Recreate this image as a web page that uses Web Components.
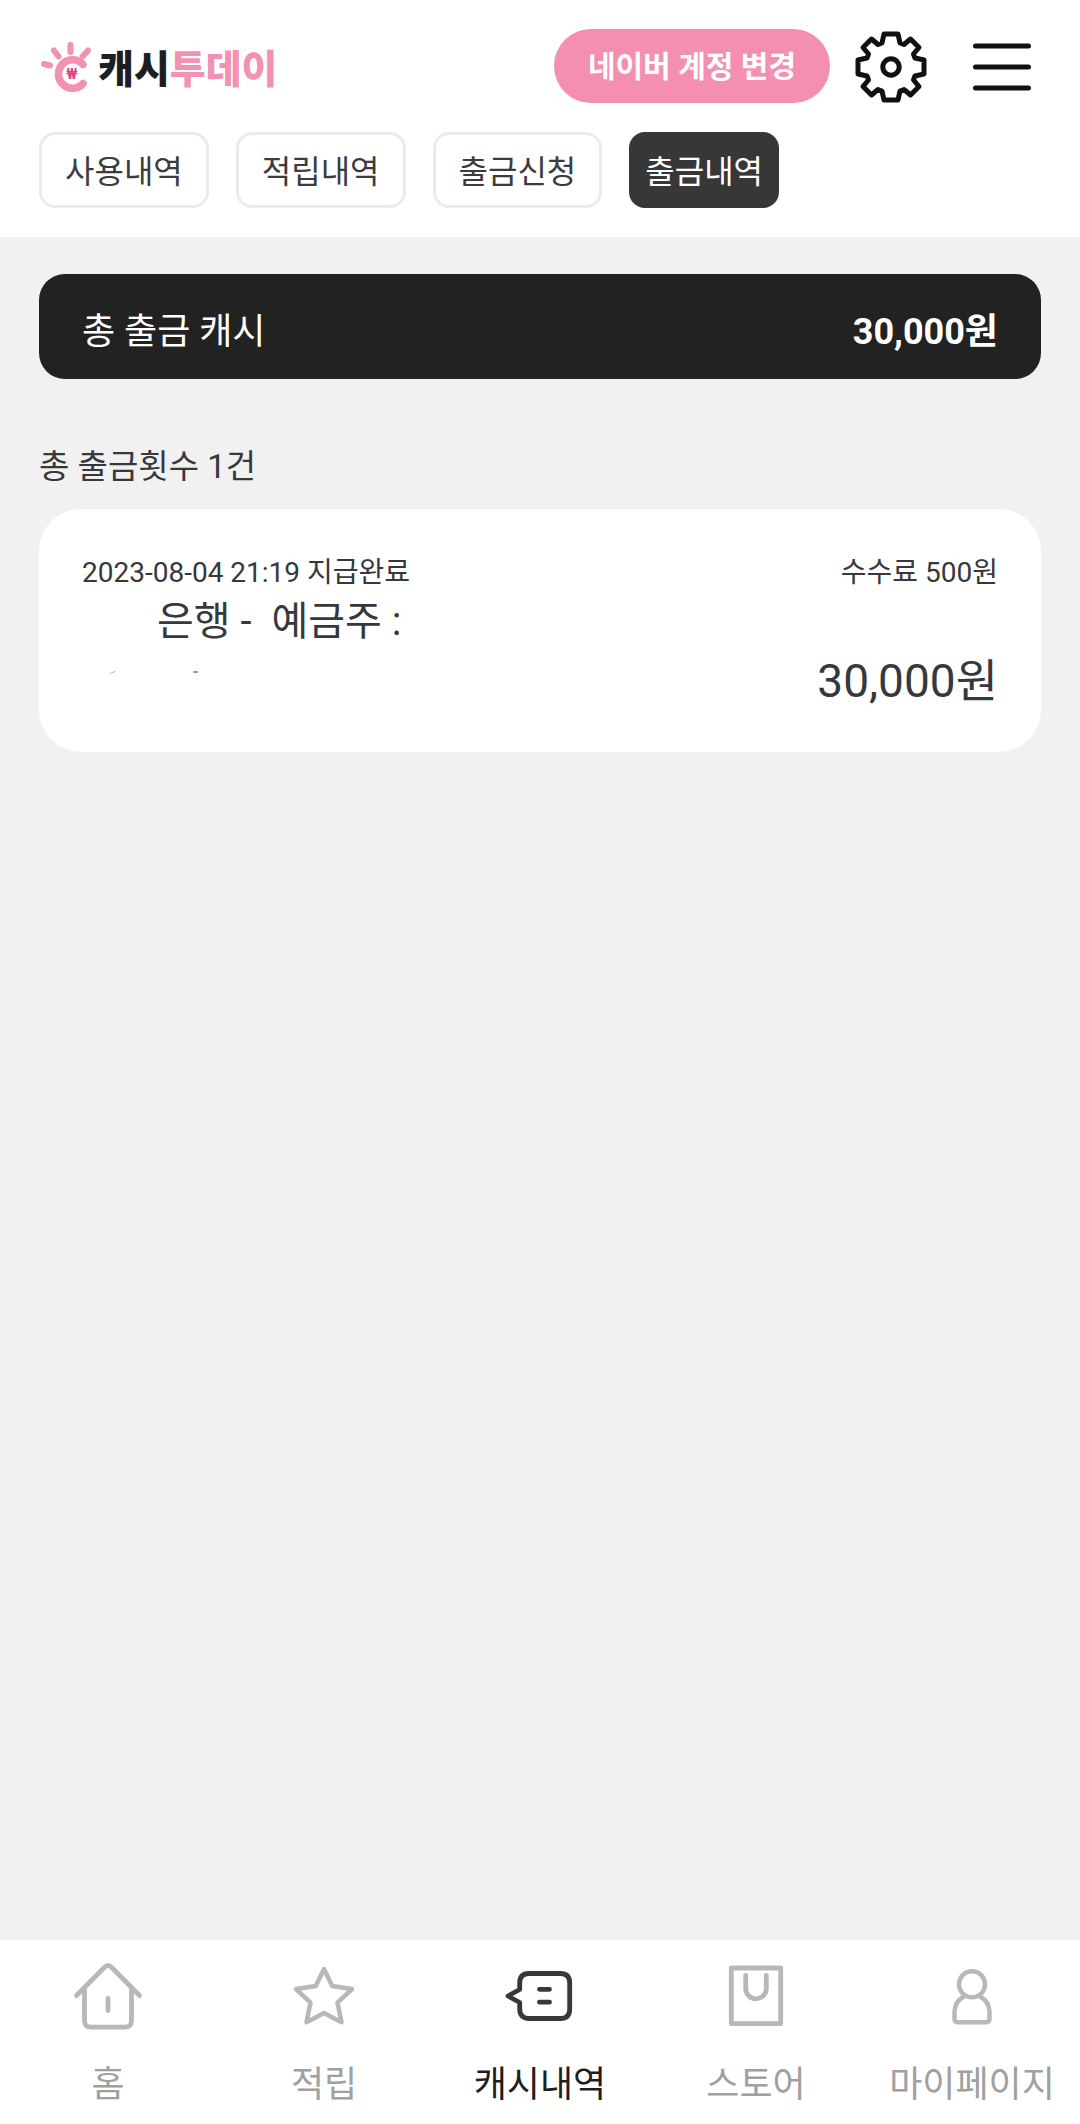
<!DOCTYPE html>
<html lang="ko">
<head>
<meta charset="utf-8">
<meta name="viewport" content="width=device-width, initial-scale=1">
<title>캐시투데이</title>
<style>
  body { margin: 0; background: #f1f1f1; color: #36383b; font-family: Roboto, "Noto Sans CJK KR", sans-serif; }
</style>
</head>
<body>
<cash-app>
  <app-header slot="header">
    <history-tab slot="tabs">사용내역</history-tab>
    <history-tab slot="tabs">적립내역</history-tab>
    <history-tab slot="tabs">출금신청</history-tab>
    <history-tab slot="tabs" active>출금내역</history-tab>
  </app-header>
  <total-card><span slot="label">총 출금 캐시</span><span slot="amount">30,000원</span></total-card>
  <withdraw-list>
    <span slot="caption">총 출금횟수 1건</span>
    <withdraw-card>
      <span slot="status">2023-08-04 21:19 지급완료</span>
      <span slot="fee">수수료 500원</span>
      <span slot="bank">은행 -&nbsp; 예금주 :</span>
      <span slot="amount">30,000원</span>
    </withdraw-card>
  </withdraw-list>
  <bottom-nav slot="footer">
    <nav-item icon="home">홈</nav-item>
    <nav-item icon="star">적립</nav-item>
    <nav-item icon="ticket" active>캐시내역</nav-item>
    <nav-item icon="bag">스토어</nav-item>
    <nav-item icon="person">마이페이지</nav-item>
  </bottom-nav>
</cash-app>
<script>
const define = (name, html) => customElements.define(name, class extends HTMLElement {
  constructor() {
    super();
    this.attachShadow({ mode: 'open' }).innerHTML = html;
  }
});

define('cash-app', `
<style>
  :host { display: flex; flex-direction: column; min-height: 100vh; }
  main { flex: 1; padding: 37px 39px; }
  footer { position: sticky; bottom: 0; }
</style>
<slot name="header"></slot>
<main><slot></slot></main>
<footer><slot name="footer"></slot></footer>`);

define('brand-logo', `
<style>
  :host { display: block; }
  a { display: flex; align-items: center; gap: 7px; color: #1e1e1e; text-decoration: none;
      font: 900 39px/52px "Noto Sans CJK KR", sans-serif; }
  svg { display: block; flex: none; }
  b { font-weight: 900; color: #f291b2; }
</style>
<a href="#">
  <svg width="52" height="54" viewBox="0 0 52 54" fill="none" stroke="#f291b2" stroke-linecap="round" aria-hidden="true">
    <path d="M44 25.500A14 14.300 0 1 0 44 44.500" stroke-width="7.600"/>
    <path d="M31.500 6V13M15 11.500L19.500 17.500M49 11.500L43.500 17.500M5 25L11 26.500" stroke-width="6"/>
    <text x="33" y="39.500" text-anchor="middle" font-family="Roboto, sans-serif" font-weight="700" font-size="14" fill="#d9408c" stroke="none">₩</text>
  </svg>
  <span>캐시<b>투데이</b></span>
</a>`);

define('app-header', `
<style>
  :host { display: block; background: #fff; padding: 29px 39px; }
  .top { display: flex; align-items: center; height: 74px; }
  brand-logo { margin-right: auto; }
  button { border: 0; background: none; margin: 0; padding: 0; cursor: pointer; }
  .account { height: 74px; padding: 2px 34px 0; border-radius: 37px; background: #f48fb1; color: #fff;
    font: 700 30px/44px Roboto, "Noto Sans CJK KR", sans-serif; white-space: nowrap; }
  .gear { margin: 0 26px 0 25px; padding-top: 2px; }
  .menu { padding: 2px 10px 0 20px; }
  svg { display: block; }
  nav { display: flex; gap: 27px; margin-top: 29px; }
</style>
<div class="top">
  <brand-logo></brand-logo>
  <button class="account">네이버 계정 변경</button>
  <button class="gear" aria-label="설정">
    <svg width="72" height="72" viewBox="-36 -36 72 72" fill="none" stroke="#111" stroke-width="5" stroke-linejoin="round">
      <path d="M-7 -33H7L9 -24L13 -22.500L19.500 -28L28 -19.500L22.500 -13L24 -9L33 -7V7L24 9L22.500 13L28 19.500L19.500 28L13 22.500L9 24L7 33H-7L-9 24L-13 22.500L-19.500 28L-28 19.500L-22.500 13L-24 9L-33 7V-7L-24 -9L-22.500 -13L-28 -19.500L-19.500 -28L-13 -22.500L-9 -24Z"/>
      <circle r="8.200"/>
    </svg>
  </button>
  <button class="menu" aria-label="메뉴">
    <svg width="58" height="50" viewBox="0 0 58 50" stroke="#111" stroke-width="5" stroke-linecap="round">
      <path d="M2.500 4H55.500M2.500 25H55.500M2.500 46H55.500"/>
    </svg>
  </button>
</div>
<nav><slot name="tabs"></slot></nav>`);

define('history-tab', `
<style>
  :host { display: block; }
  a { display: block; box-sizing: border-box; height: 76px; padding: 2px 23px 0; border: 3px solid #ebebeb; border-radius: 16px;
    color: #3c3c3e; font-size: 32px; line-height: 70px; white-space: nowrap; text-decoration: none; }
  :host([active]) a { padding: 2px 13px 0; border-color: #373737; background: #373737; color: #fff; }
</style>
<a href="#"><slot></slot></a>`);

define('total-card', `
<style>
  :host { display: flex; justify-content: space-between; align-items: center; padding: 31px 43px 20px; border-radius: 26px;
    background: #222; color: #fff; font-size: 36px; line-height: 54px; }
  strong { font-weight: 700; }
</style>
<span><slot name="label"></slot></span><strong><slot name="amount"></slot></strong>`);

define('withdraw-list', `
<style>
  :host { display: block; margin-top: 64px; }
  h2 { margin: 0 0 18px; font-size: 33px; line-height: 48px; font-weight: 400; }
</style>
<h2><slot name="caption"></slot></h2>
<slot></slot>`);

define('withdraw-card', `
<style>
  :host { display: block; padding: 44px 43px 41px; border-radius: 42px; background: #fff; }
  .row { display: flex; justify-content: space-between; align-items: center; font-size: 28px; line-height: 40px; }
  .bank { padding-left: 75px; font-size: 40px; line-height: 58px; }
  .total { font-size: 46px; line-height: 60px; }
  svg { display: block; }
</style>
<div class="row"><slot name="status"></slot><slot name="fee"></slot></div>
<div class="bank"><slot name="bank"></slot></div>
<div class="row">
  <svg width="140" height="40" viewBox="0 0 140 40" fill="none" stroke="#bbb" stroke-linecap="round" aria-hidden="true">
    <path d="M28 12.500L33 10.500"/><path d="M112 11H115" stroke="#999" stroke-width="2"/>
  </svg>
  <span class="total"><slot name="amount"></slot></span>
</div>`);

define('bottom-nav', `
<style>
  :host { display: block; background: #fff; }
  nav { display: grid; grid-template-columns: repeat(5, 1fr); }
</style>
<nav><slot></slot></nav>`);

const icons = {
  home: '<path d="M4.500 35.500L32.500 7.300Q36 3.800 39.500 7.300L67.500 35.500M12.500 28V60.500Q12.500 67.200 19 67.200H53Q59.500 67.200 59.500 60.500V28M36 38.500V50.500"/>',
  star: '<path d="M36 9L44.200 26L64 29L49.500 42.700L53.500 62.300L36 53L18.500 62.300L22.500 42.700L8 29L27.800 26Z" stroke-width="4.500"/>',
  ticket: '<path d="M15.700 29.500V23Q15.700 13.500 25 13.500H56.500Q65.700 13.500 65.700 23V49Q65.700 58.500 56.500 58.500H25Q15.700 58.500 15.700 49V42.500L4 36ZM35.500 29.300H45.500M35.500 42.200H45.500"/>',
  bag: '<path d="M11.300 8H60.700V63.700H11.300ZM25.700 15.500V28.500A10.300 10.300 0 0 0 46.300 28.500V15.500"/>',
  person: '<g stroke-width="4.500"><circle cx="36" cy="24.300" r="13"/><path d="M28.500 36C21.500 40 18.500 46 18.500 52V58.500Q18.500 62.300 22 62.300H50Q53.500 62.300 53.500 58.500V52C53.500 46 50.500 40 43.500 36"/></g>'
};

customElements.define('nav-item', class extends HTMLElement {
  constructor() {
    super();
    this.attachShadow({ mode: 'open' });
  }
  connectedCallback() {
    this.shadowRoot.innerHTML = `
<style>
  :host { display: block; }
  a { display: flex; flex-direction: column; align-items: center; padding: 20px 0 12px; gap: 26px;
    color: #a0a0a0; font-size: 36px; line-height: 54px; white-space: nowrap; text-decoration: none; }
  svg { display: block; stroke: #b8b8b8; }
  :host([active]) a { color: #1e1e1e; }
  :host([active]) svg { stroke: #383838; }
</style>
<a href="#"><svg width="72" height="72" viewBox="0 0 72 72" fill="none" stroke-width="4.800" stroke-linecap="round" stroke-linejoin="round" aria-hidden="true">${icons[this.getAttribute('icon')]}</svg><span><slot></slot></span></a>`;
  }
});
</script>
</body>
</html>
